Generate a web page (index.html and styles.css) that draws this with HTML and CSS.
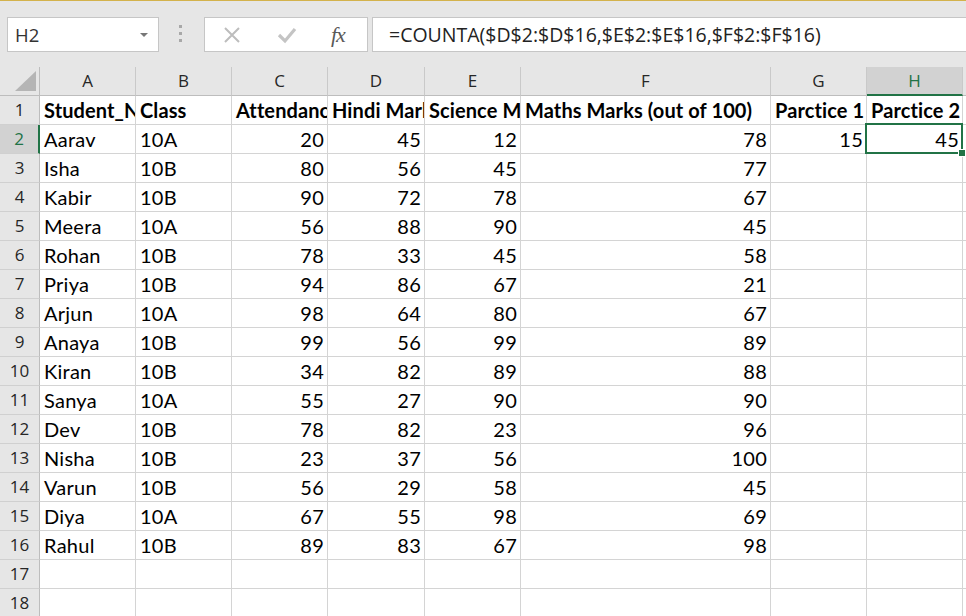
FILE: index.html
```html
<!DOCTYPE html>
<html>
<head>
<meta charset="utf-8">
<link rel="stylesheet" href="styles.css">
</head>
<body>
<div class="topbar">
  <div class="namebox"><span class="nb-text">H2</span><span class="nb-arrow"></span></div>
  <div class="dots"><i></i><i></i><i></i></div>
  <div class="fxbox">
    <svg class="ic-x" width="18" height="18" viewBox="0 0 18 18"><path d="M2 2 L16 16 M16 2 L2 16" stroke="#bdbdbd" stroke-width="2" fill="none"/></svg>
    <svg class="ic-check" width="20" height="18" viewBox="0 0 20 18"><path d="M2 9 L8 15 L18 3" stroke="#c4c4c4" stroke-width="3.2" fill="none"/></svg>
    <span class="ic-fx">fx</span>
  </div>
  <div class="formula">=COUNTA($D$2:$D$16,$E$2:$E$16,$F$2:$F$16)</div>
</div>
<div class="sheet">
  <div class="corner"><span class="tri"></span></div>
  <div class="ch">A</div><div class="ch">B</div><div class="ch">C</div><div class="ch">D</div><div class="ch">E</div><div class="ch">F</div><div class="ch">G</div><div class="ch ch-sel">H</div><div class="ch"></div>

  <div class="rh">1</div><div class="c b">Student_Name</div><div class="c b">Class</div><div class="c b">Attendance</div><div class="c b">Hindi Marks</div><div class="c b">Science Marks</div><div class="c b">Maths Marks (out of 100)</div><div class="c b">Parctice 1</div><div class="c b">Parctice 2</div><div class="c"></div>

  <div class="rh rh-sel">2</div><div class="c">Aarav</div><div class="c">10A</div><div class="c n">20</div><div class="c n">45</div><div class="c n">12</div><div class="c n">78</div><div class="c n">15</div><div class="c n sel">45<span class="selbox"></span><span class="handle"></span></div><div class="c"></div>

  <div class="rh">3</div><div class="c">Isha</div><div class="c">10B</div><div class="c n">80</div><div class="c n">56</div><div class="c n">45</div><div class="c n">77</div><div class="c"></div><div class="c"></div><div class="c"></div>

  <div class="rh">4</div><div class="c">Kabir</div><div class="c">10B</div><div class="c n">90</div><div class="c n">72</div><div class="c n">78</div><div class="c n">67</div><div class="c"></div><div class="c"></div><div class="c"></div>

  <div class="rh">5</div><div class="c">Meera</div><div class="c">10A</div><div class="c n">56</div><div class="c n">88</div><div class="c n">90</div><div class="c n">45</div><div class="c"></div><div class="c"></div><div class="c"></div>

  <div class="rh">6</div><div class="c">Rohan</div><div class="c">10B</div><div class="c n">78</div><div class="c n">33</div><div class="c n">45</div><div class="c n">58</div><div class="c"></div><div class="c"></div><div class="c"></div>

  <div class="rh">7</div><div class="c">Priya</div><div class="c">10B</div><div class="c n">94</div><div class="c n">86</div><div class="c n">67</div><div class="c n">21</div><div class="c"></div><div class="c"></div><div class="c"></div>

  <div class="rh">8</div><div class="c">Arjun</div><div class="c">10A</div><div class="c n">98</div><div class="c n">64</div><div class="c n">80</div><div class="c n">67</div><div class="c"></div><div class="c"></div><div class="c"></div>

  <div class="rh">9</div><div class="c">Anaya</div><div class="c">10B</div><div class="c n">99</div><div class="c n">56</div><div class="c n">99</div><div class="c n">89</div><div class="c"></div><div class="c"></div><div class="c"></div>

  <div class="rh">10</div><div class="c">Kiran</div><div class="c">10B</div><div class="c n">34</div><div class="c n">82</div><div class="c n">89</div><div class="c n">88</div><div class="c"></div><div class="c"></div><div class="c"></div>

  <div class="rh">11</div><div class="c">Sanya</div><div class="c">10A</div><div class="c n">55</div><div class="c n">27</div><div class="c n">90</div><div class="c n">90</div><div class="c"></div><div class="c"></div><div class="c"></div>

  <div class="rh">12</div><div class="c">Dev</div><div class="c">10B</div><div class="c n">78</div><div class="c n">82</div><div class="c n">23</div><div class="c n">96</div><div class="c"></div><div class="c"></div><div class="c"></div>

  <div class="rh">13</div><div class="c">Nisha</div><div class="c">10B</div><div class="c n">23</div><div class="c n">37</div><div class="c n">56</div><div class="c n">100</div><div class="c"></div><div class="c"></div><div class="c"></div>

  <div class="rh">14</div><div class="c">Varun</div><div class="c">10B</div><div class="c n">56</div><div class="c n">29</div><div class="c n">58</div><div class="c n">45</div><div class="c"></div><div class="c"></div><div class="c"></div>

  <div class="rh">15</div><div class="c">Diya</div><div class="c">10A</div><div class="c n">67</div><div class="c n">55</div><div class="c n">98</div><div class="c n">69</div><div class="c"></div><div class="c"></div><div class="c"></div>

  <div class="rh">16</div><div class="c">Rahul</div><div class="c">10B</div><div class="c n">89</div><div class="c n">83</div><div class="c n">67</div><div class="c n">98</div><div class="c"></div><div class="c"></div><div class="c"></div>

  <div class="rh">17</div><div class="c"></div><div class="c"></div><div class="c"></div><div class="c"></div><div class="c"></div><div class="c"></div><div class="c"></div><div class="c"></div><div class="c"></div>

  <div class="rh">18</div><div class="c"></div><div class="c"></div><div class="c"></div><div class="c"></div><div class="c"></div><div class="c"></div><div class="c"></div><div class="c"></div><div class="c"></div>
</div>
</body>
</html>
```
FILE: styles.css
```css
html, body {
  margin: 0;
  padding: 0;
}
body {
  width: 966px;
  height: 616px;
  overflow: hidden;
  background: #ffffff;
  font-family: Lato, "Liberation Sans", sans-serif;
}
.topbar {
  height: 67px;
  box-sizing: border-box;
  border-top: 1px solid #d3b24c;
  background: #e6e6e6;
  display: flex;
  align-items: flex-start;
  padding-top: 16px;
}
.namebox {
  margin-left: 7px;
  width: 152px;
  height: 35px;
  box-sizing: border-box;
  border: 1px solid #c6c6c6;
  background: #fff;
  display: flex;
  align-items: center;
  padding-left: 7px;
  padding-right: 10px;
}
.nb-text {
  flex: 1;
  font-family: "Open Sans", sans-serif;
  font-size: 18.5px;
  color: #333;
}
.nb-arrow {
  width: 0;
  height: 0;
  border-left: 4px solid transparent;
  border-right: 4px solid transparent;
  border-top: 4px solid #777;
}
.dots {
  margin-left: 20px;
  margin-top: 8px;
  display: flex;
  flex-direction: column;
  gap: 4px;
}
.dots i {
  display: block;
  width: 3px;
  height: 3px;
  background: #a8a8a8;
}
.fxbox {
  margin-left: 22px;
  width: 164px;
  height: 35px;
  box-sizing: border-box;
  border: 1px solid #c6c6c6;
  background: #fff;
  display: flex;
  align-items: center;
  padding-left: 18px;
}
.ic-check {
  margin-left: 36px;
}
.ic-fx {
  margin-left: 34px;
  font-family: "Liberation Serif", serif;
  font-style: italic;
  font-size: 22px;
  color: #595959;
  letter-spacing: -1px;
}
.formula {
  margin-left: 4px;
  flex: 1;
  height: 35px;
  box-sizing: border-box;
  border: 1px solid #c6c6c6;
  border-right: none;
  background: #fff;
  padding-left: 16px;
  font-family: "Open Sans", sans-serif;
  font-size: 19.5px;
  color: #222;
  line-height: 33px;
  white-space: nowrap;
}
.sheet {
  display: grid;
  grid-template-columns: 40px 96px 96px 96px 97px 96px 250px 96px 96px 1fr;
  grid-auto-rows: 29px;
}
.corner, .ch {
  background: #e6e6e6;
  border-right: 1px solid #c9c9c9;
  border-bottom: 1px solid #bdbdbd;
  box-sizing: border-box;
}
.corner {
  border-right-color: #bdbdbd;
  position: relative;
}
.tri {
  position: absolute;
  right: 3px;
  bottom: 4px;
  width: 0;
  height: 0;
  border-left: 21px solid transparent;
  border-bottom: 20px solid #b5b5b5;
}
.ch {
  font-family: "Open Sans", sans-serif;
  font-size: 17px;
  color: #262626;
  text-align: center;
  line-height: 28px;
}
.ch-sel {
  background: #d2d2d2;
  color: #217346;
  border-bottom: 2px solid #217346;
  line-height: 27px;
}
.rh {
  background: #e6e6e6;
  border-right: 1px solid #bdbdbd;
  border-bottom: 1px solid #d0d0d0;
  box-sizing: border-box;
  font-family: "Open Sans", sans-serif;
  font-size: 17px;
  color: #262626;
  text-align: center;
  line-height: 28px;
}
.rh-sel {
  background: #d2d2d2;
  color: #217346;
  border-right: 2px solid #217346;
}
.c {
  border-right: 1px solid #d4d4d4;
  border-bottom: 1px solid #d4d4d4;
  box-sizing: border-box;
  font-size: 20px;
  letter-spacing: 0.25px;
  color: #000;
  line-height: 29px;
  padding: 0 3px 0 4px;
  white-space: nowrap;
  overflow: hidden;
}
.b {
  font-weight: bold;
  letter-spacing: 0.1px;
}
.n {
  text-align: right;
}
.sel {
  position: relative;
  overflow: visible;
}
.selbox {
  position: absolute;
  left: -2px;
  top: -2px;
  right: -1px;
  bottom: -1px;
  border: 2px solid #217346;
  pointer-events: none;
}
.handle {
  position: absolute;
  right: -4px;
  bottom: -4px;
  width: 6px;
  height: 6px;
  background: #217346;
  border: 1px solid #fff;
}
```
